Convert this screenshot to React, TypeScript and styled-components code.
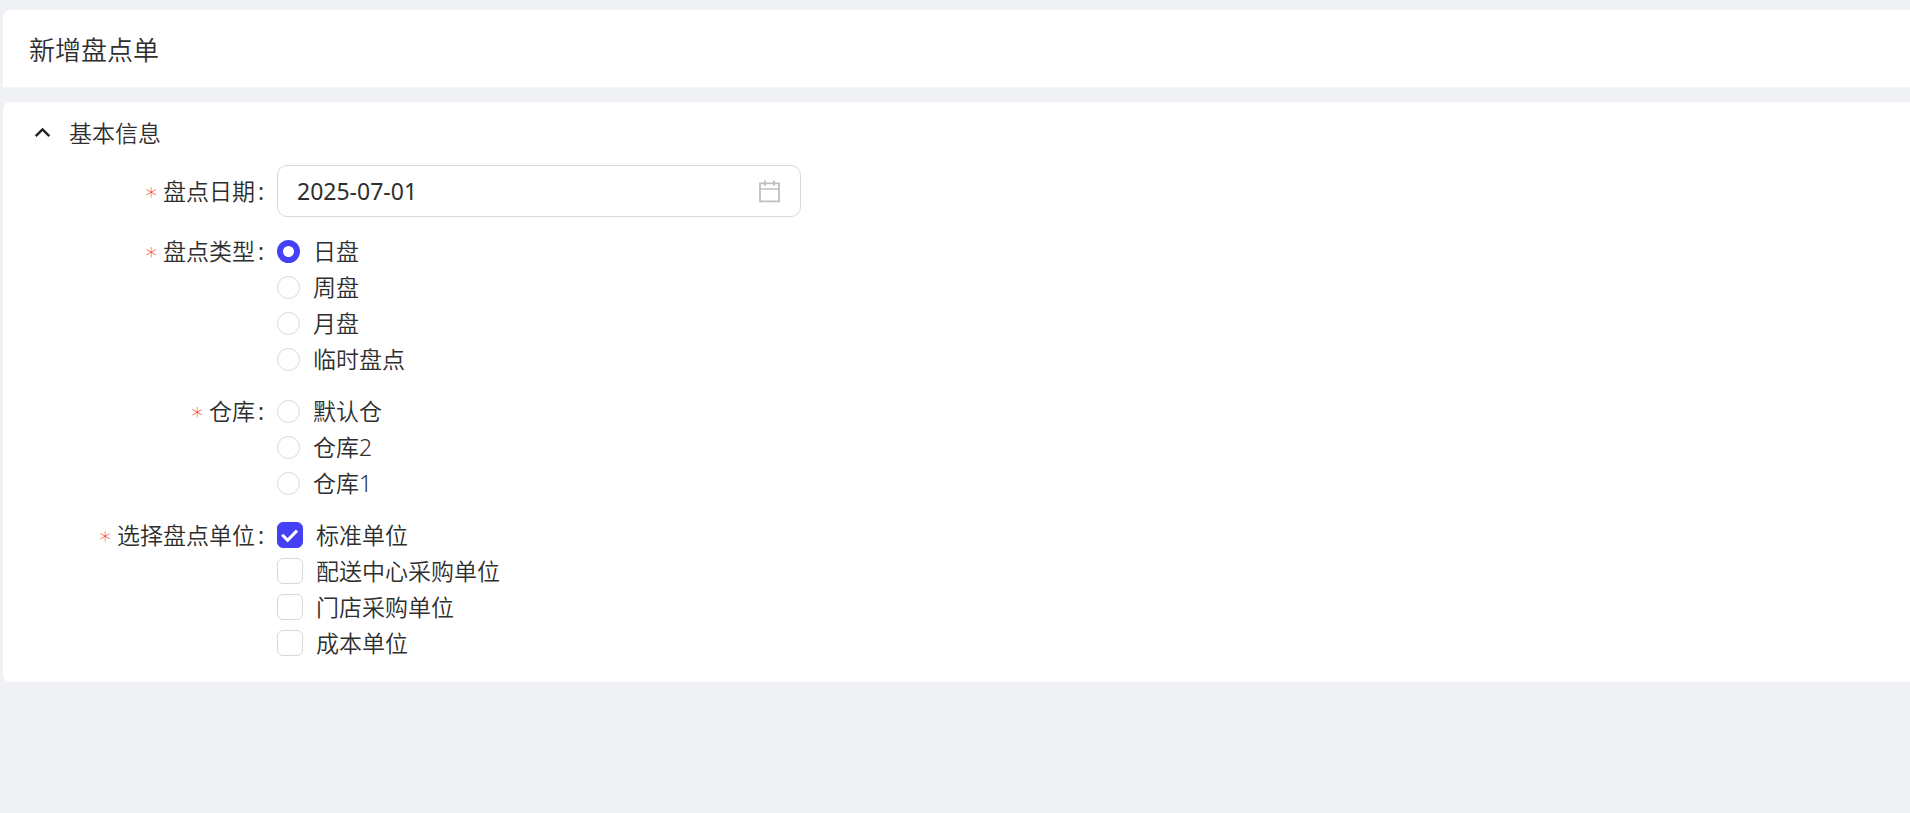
import React, { useState } from "react";
import styled, { createGlobalStyle } from "styled-components";

const GlobalStyle = createGlobalStyle`
  *, *::before, *::after { box-sizing: border-box; }
  body {
    margin: 0;
    background: #f0f1f5;
    color: #2e2e2e;
    font-family: "Open Sans", "Noto Sans CJK SC", sans-serif;
    font-size: 23px;
    font-weight: 350;
    line-height: 36px;
  }
`;

const Page = styled.main`
  display: flex;
  flex-direction: column;
  gap: 14px;
  padding: 10px 0 10px 3px;
`;

const PageHeader = styled.header`
  display: flex;
  align-items: center;
  height: 78px;
  padding: 2px 26px 0;
  background: #fff;
  border-bottom: 1px solid #f5f5f5;
  border-top-left-radius: 7px;
`;

const PageTitle = styled.h1`
  margin: 0;
  font-size: 26px;
  font-weight: 350;
  line-height: 40px;
`;

const Card = styled.section`
  padding: 13px 26px 21px;
  background: #fff;
  border-radius: 7px 0 0 7px;
`;

const SectionToggle = styled.button`
  display: flex;
  align-items: center;
  gap: 16px;
  padding: 0 0 0 3px;
  border: 0;
  background: none;
  color: inherit;
  font: inherit;
  cursor: pointer;
`;

const Form = styled.form`
  display: flex;
  flex-direction: column;
  gap: 16px;
  padding-top: 14px;
`;

const Row = styled.div`
  display: grid;
  grid-template-columns: 248px minmax(0, 524px);
`;

const LabelCell = styled.div<{ $tall?: boolean }>`
  display: flex;
  justify-content: flex-end;
  height: ${(p) => (p.$tall ? 52 : 36)}px;
  padding-right: 13px;
  line-height: ${(p) => (p.$tall ? 52 : 36)}px;
  white-space: nowrap;
`;

const Required = styled.span`
  margin-right: 6px;
  padding-top: 5px;
  color: #ff2b2f;
  font-family: "DejaVu Sans", sans-serif;
  font-weight: 200;
`;

const Colon = styled.span`
  margin-left: 3px;
  font-weight: 400;
`;

const DateBox = styled.div`
  display: flex;
  align-items: center;
  height: 52px;
  padding: 0 20px 0 19px;
  border: 1px solid #d9d9d9;
  border-radius: 10px;
  background: #fff;
`;

const DateInput = styled.input`
  flex: 1;
  min-width: 0;
  padding: 0;
  border: 0;
  outline: 0;
  background: none;
  color: inherit;
  font: inherit;
  font-family: "Noto Sans", sans-serif;
  font-weight: 400;
`;

const Options = styled.div`
  display: flex;
  flex-direction: column;
`;

const Option = styled.label`
  display: flex;
  align-items: center;
  align-self: flex-start;
  gap: 13px;
  height: 36px;
  font-family: "Noto Sans", "Noto Sans CJK SC", sans-serif;
  cursor: pointer;
`;

const Radio = styled.input`
  appearance: none;
  width: 23px;
  height: 23px;
  margin: 0;
  border: 1px solid #d9d9d9;
  border-radius: 50%;
  background: #fff;

  &:checked {
    border: 6px solid #4540f5;
  }
`;

const CheckSlot = styled.span`
  display: grid;
  width: 26px;
  height: 26px;

  & > * {
    grid-area: 1 / 1;
  }
`;

const Checkbox = styled.input`
  appearance: none;
  width: 26px;
  height: 26px;
  margin: 0;
  border: 1px solid #d9d9d9;
  border-radius: 6px;
  background: #fff;

  &:checked {
    border-color: #4540f5;
    background: #4540f5;
  }
`;

const Tick = styled.svg`
  pointer-events: none;
`;

const ChevronUp = () => (
  <svg width="21" height="20" viewBox="0 0 21 20" fill="none" stroke="#222" strokeWidth="2.4" aria-hidden="true">
    <path d="M3.7 13.2L10.5 6.4L17.3 13.2" />
  </svg>
);

const CalendarIcon = () => (
  <svg width="21" height="23" viewBox="0 0 21 23" fill="none" stroke="#bfbfbf" aria-hidden="true">
    <path d="M1 3.3H20V21.3H1Z" strokeWidth="1.8" />
    <path d="M1 9H20" strokeWidth="1.5" />
    <path d="M6 0.5V6M15 0.5V6" strokeWidth="1.8" />
  </svg>
);

type FieldLabelProps = { text: string; htmlFor?: string; id?: string };

const FieldLabel = ({ text, htmlFor, id }: FieldLabelProps) => (
  <LabelCell $tall={Boolean(htmlFor)}>
    <Required>*</Required>
    {htmlFor ? <label htmlFor={htmlFor}>{text}</label> : <span id={id}>{text}</span>}
    <Colon>:</Colon>
  </LabelCell>
);

type RadioFieldProps = { label: string; name: string; options: string[]; initial?: string };

const RadioField = ({ label, name, options, initial }: RadioFieldProps) => {
  const [value, setValue] = useState(initial);
  return (
    <Row>
      <FieldLabel text={label} id={`${name}-label`} />
      <Options role="radiogroup" aria-labelledby={`${name}-label`}>
        {options.map((option) => (
          <Option key={option}>
            <Radio type="radio" name={name} checked={value === option} onChange={() => setValue(option)} />
            {option}
          </Option>
        ))}
      </Options>
    </Row>
  );
};

const units = ["标准单位", "配送中心采购单位", "门店采购单位", "成本单位"];

const UnitField = () => {
  const [selected, setSelected] = useState<string[]>([units[0]]);
  const toggle = (unit: string) =>
    setSelected((prev) => (prev.includes(unit) ? prev.filter((u) => u !== unit) : [...prev, unit]));
  return (
    <Row>
      <FieldLabel text="选择盘点单位" id="unit-label" />
      <Options role="group" aria-labelledby="unit-label">
        {units.map((unit) => (
          <Option key={unit}>
            <CheckSlot>
              <Checkbox type="checkbox" checked={selected.includes(unit)} onChange={() => toggle(unit)} />
              {selected.includes(unit) && (
                <Tick width="26" height="26" viewBox="0 0 26 26" fill="none" stroke="#fff" strokeWidth="3" aria-hidden="true">
                  <path d="M5.2 12.8L10.6 18.4L20 8.6" />
                </Tick>
              )}
            </CheckSlot>
            {unit}
          </Option>
        ))}
      </Options>
    </Row>
  );
};

export default function App() {
  const [open, setOpen] = useState(true);
  const [date, setDate] = useState("2025-07-01");
  return (
    <>
      <GlobalStyle />
      <Page>
        <PageHeader>
          <PageTitle>新增盘点单</PageTitle>
        </PageHeader>
        <Card>
          <SectionToggle type="button" aria-expanded={open} onClick={() => setOpen(!open)}>
            <ChevronUp />
            基本信息
          </SectionToggle>
          {open && (
            <Form>
              <Row>
                <FieldLabel text="盘点日期" htmlFor="date" />
                <DateBox>
                  <DateInput id="date" type="text" value={date} onChange={(e) => setDate(e.target.value)} />
                  <CalendarIcon />
                </DateBox>
              </Row>
              <RadioField
                label="盘点类型"
                name="type"
                options={["日盘", "周盘", "月盘", "临时盘点"]}
                initial="日盘"
              />
              <RadioField label="仓库" name="warehouse" options={["默认仓", "仓库2", "仓库1"]} />
              <UnitField />
            </Form>
          )}
        </Card>
      </Page>
    </>
  );
}
